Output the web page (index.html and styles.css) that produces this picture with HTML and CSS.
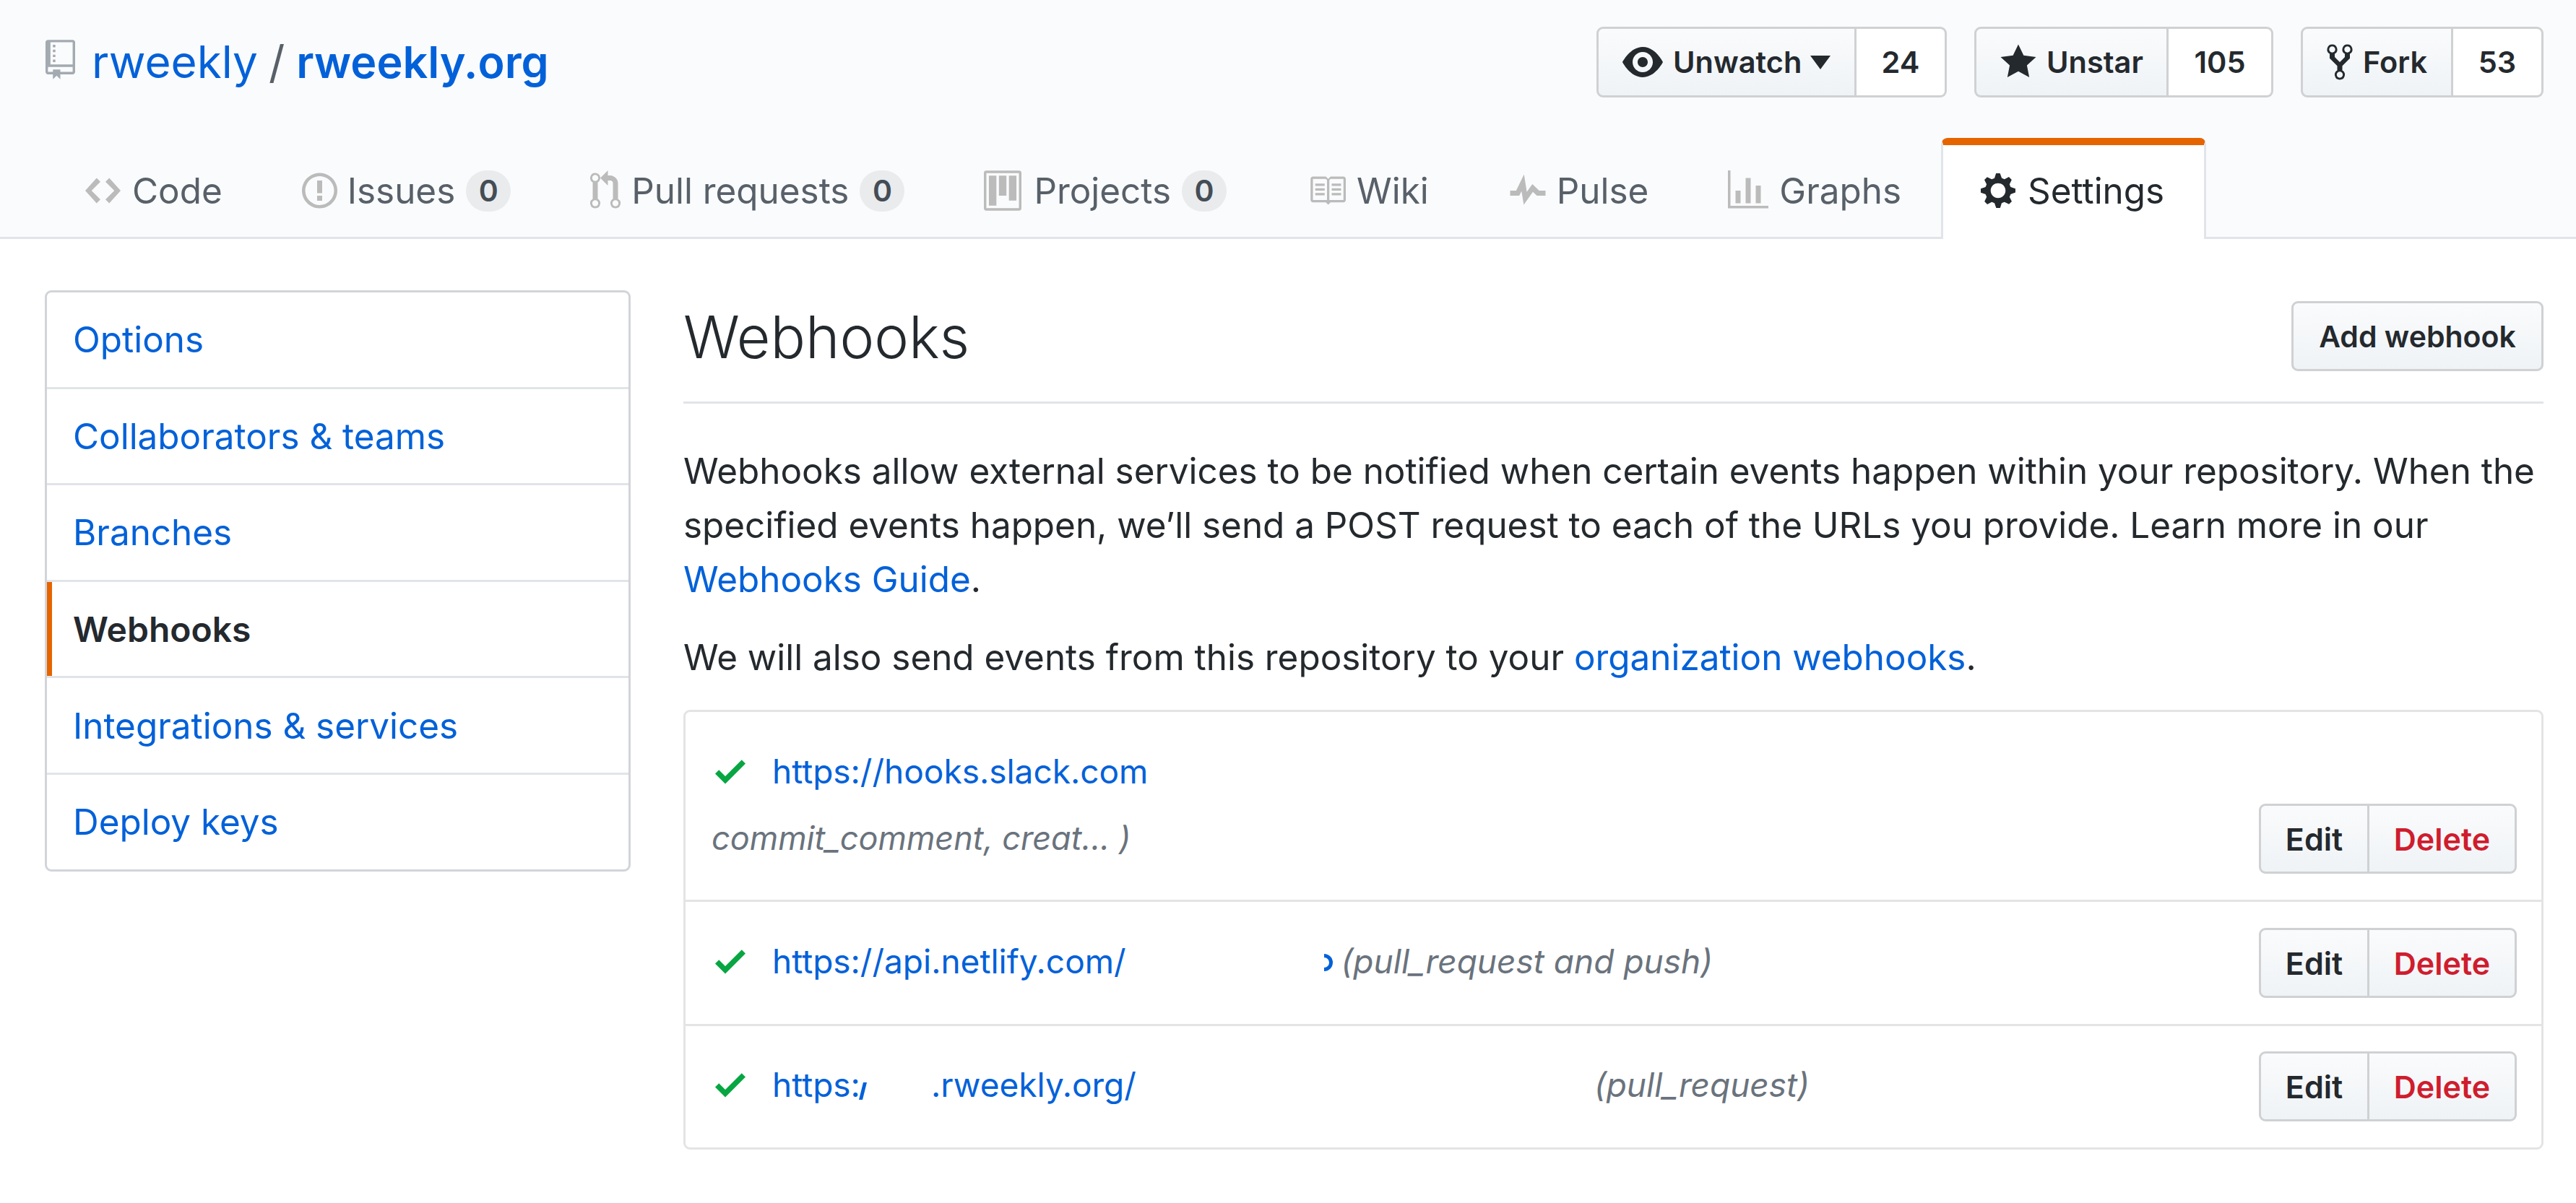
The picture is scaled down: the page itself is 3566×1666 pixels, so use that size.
FILE: index.html
```html
<!DOCTYPE html>
<html lang="en">
<head>
<meta charset="utf-8">
<title>Webhooks</title>
<link rel="stylesheet" href="styles.css">
</head>
<body>
<header class="pagehead">
  <div class="repo-row">
    <h1 class="repo-title">
      <svg class="ico ico-repo" viewBox="0 0 12 16"><path d="M4 9H3V8h1v1zm0-3H3v1h1V6zm0-2H3v1h1V4zm0-2H3v1h1V2zm8-1v12c0 .55-.45 1-1 1H6v2l-1.5-1.5L3 16v-2H1c-.55 0-1-.45-1-1V1c0-.55.45-1 1-1h10c.55 0 1 .45 1 1zm-1 10H1v2h2v-1h3v1h5v-2zm0-10H2v9h9V1z"/></svg>
      <a class="owner" href="#">rweekly</a><span class="slash">/</span><a class="repo" href="#">rweekly.org</a>
    </h1>
    <div class="actions">
      <div class="social s-watch">
        <span class="social-btn"><svg class="ico ico-eye" viewBox="0 0 16 16"><path d="M8.06 2C3 2 0 8 0 8s3 6 8.06 6C13 14 16 8 16 8s-3-6-7.94-6zM8 12c-2.2 0-4-1.78-4-4 0-2.2 1.8-4 4-4 2.22 0 4 1.8 4 4 0 2.22-1.78 4-4 4zm2-4c0 1.11-.89 2-2 2-1.11 0-2-.89-2-2 0-1.11.89-2 2-2 1.11 0 2 .89 2 2z"/></svg>Unwatch<span class="caret"></span></span>
        <span class="social-count">24</span>
      </div>
      <div class="social s-star">
        <span class="social-btn"><svg class="ico ico-star" viewBox="0 0 14 16"><path d="M14 6l-4.9-.64L7 1 4.9 5.36 0 6l3.6 3.26L2.67 14 7 11.67 11.33 14l-.93-4.74L14 6z"/></svg>Unstar</span>
        <span class="social-count">105</span>
      </div>
      <div class="social s-fork">
        <span class="social-btn"><svg class="ico ico-fork" viewBox="0 0 10 16"><path d="M8 1a1.993 1.993 0 0 0-1 3.72V6L5 8 3 6V4.72A1.993 1.993 0 0 0 2 1a1.993 1.993 0 0 0-1 3.72V6.5l3 3v1.78A1.993 1.993 0 0 0 5 15a1.993 1.993 0 0 0 1-3.72V9.5l3-3V4.72A1.993 1.993 0 0 0 8 1zM2 4.2C1.34 4.2.8 3.65.8 3c0-.65.55-1.2 1.2-1.2.65 0 1.2.55 1.2 1.2 0 .65-.55 1.2-1.2 1.2zm3 10c-.66 0-1.2-.55-1.2-1.2 0-.65.55-1.2 1.2-1.2.65 0 1.2.55 1.2 1.2 0 .65-.55 1.2-1.2 1.2zm3-10c-.66 0-1.2-.55-1.2-1.2 0-.65.55-1.2 1.2-1.2.65 0 1.2.55 1.2 1.2 0 .65-.55 1.2-1.2 1.2z"/></svg>Fork</span>
        <span class="social-count">53</span>
      </div>
    </div>
  </div>
  <nav class="tabs">
    <a class="tab" href="#"><svg class="ico ti-code" viewBox="0 0 14 16"><path d="M9.5 3L8 4.5 11.5 8 8 11.5 9.5 13 14 8 9.5 3zm-5 0L0 8l4.5 5L6 11.5 2.5 8 6 4.5 4.5 3z"/></svg>Code</a>
    <a class="tab" href="#"><svg class="ico ti-issue" viewBox="0 0 14 16"><path d="M7 2.3c3.14 0 5.7 2.56 5.7 5.7s-2.56 5.7-5.7 5.7A5.71 5.71 0 0 1 1.3 8c0-3.14 2.56-5.7 5.7-5.7zM7 1C3.14 1 0 4.14 0 8s3.14 7 7 7 7-3.14 7-7-3.14-7-7-7zm1 3H6v5h2V4zm0 6H6v2h2v-2z"/></svg>Issues<span class="counter">0</span></a>
    <a class="tab" href="#"><svg class="ico ti-pull" viewBox="0 0 12 16"><path d="M11 11.28V5c-.03-.78-.34-1.47-.94-2.06C9.46 2.35 8.78 2.03 8 2H7V0L4 3l3 3V4h1c.27.02.48.11.69.31.21.2.3.42.31.69v6.28A1.993 1.993 0 0 0 10 15a1.993 1.993 0 0 0 1-3.72zm-1 2.92c-.66 0-1.2-.55-1.2-1.2 0-.65.55-1.2 1.2-1.2.65 0 1.2.55 1.2 1.2 0 .65-.55 1.2-1.2 1.2zM4 3c0-1.11-.89-2-2-2a1.993 1.993 0 0 0-1 3.72v6.56A1.993 1.993 0 0 0 2 15a1.993 1.993 0 0 0 1-3.72V4.72c.59-.34 1-.98 1-1.72zm-.8 10c0 .66-.55 1.2-1.2 1.2-.65 0-1.2-.55-1.2-1.2 0-.65.55-1.2 1.2-1.2.65 0 1.2.55 1.2 1.2zM2 4.2C1.34 4.2.8 3.65.8 3c0-.65.55-1.2 1.2-1.2.65 0 1.2.55 1.2 1.2 0 .65-.55 1.2-1.2 1.2z"/></svg>Pull requests<span class="counter">0</span></a>
    <a class="tab" href="#"><svg class="ico ti-proj" viewBox="0 0 15 16"><path d="M10 12h3V2h-3v10zm-4-2h3V2H6v8zm-4 4h3V2H2v12zm-1 1h13V1H1v14zM14 0H1a1 1 0 0 0-1 1v14a1 1 0 0 0 1 1h13a1 1 0 0 0 1-1V1a1 1 0 0 0-1-1z"/></svg>Projects<span class="counter">0</span></a>
    <a class="tab" href="#"><svg class="ico ti-book" viewBox="0 0 16 16"><path d="M3 5h4v1H3V5zm0 3h4V7H3v1zm0 2h4V9H3v1zm11-5h-4v1h4V5zm0 2h-4v1h4V7zm0 2h-4v1h4V9zm2-6v9c0 .55-.45 1-1 1H9.5l-1 1-1-1H2c-.55 0-1-.45-1-1V3c0-.55.45-1 1-1h5.5l1 1 1-1H15c.55 0 1 .45 1 1zm-8 .5L7.5 3H2v9h6V3.5zm7-.5H9.5l-.5.5V12h6V3z"/></svg>Wiki</a>
    <a class="tab" href="#"><svg class="ico ti-pulse" viewBox="0 0 14 16"><path d="M11.5 8L8.8 5.4 6.6 8.5 5.5 1.6 2.38 8H0v2h3.6l.9-1.8.9 5.4L9 8.5l1.6 1.5H14V8z"/></svg>Pulse</a>
    <a class="tab" href="#"><svg class="ico ti-graph" viewBox="0 0 16 16"><path d="M16 14v1H0V0h1v14h15zM5 13H3V8h2v5zm4 0H7V3h2v10zm4 0h-2V6h2v7z"/></svg>Graphs</a>
    <a class="tab tab-active" href="#"><svg class="ico ti-gear" viewBox="0 0 14 16"><path d="M14 8.77v-1.6l-1.94-.64-.45-1.09.88-1.84-1.13-1.13-1.81.91-1.09-.45-.69-1.92h-1.6l-.63 1.94-1.11.45-1.84-.88-1.13 1.13.91 1.81-.45 1.09L0 7.23v1.59l1.94.64.45 1.09-.88 1.84 1.13 1.13 1.81-.91 1.09.45.69 1.92h1.59l.63-1.94 1.11-.45 1.84.88 1.13-1.13-.92-1.81.47-1.09L14 8.75v.02zM7 11c-1.66 0-3-1.34-3-3s1.34-3 3-3 3 1.34 3 3-1.34 3-3 3z"/></svg>Settings</a>
  </nav>
</header>
<main class="layout">
  <aside class="menu">
    <a class="menu-item" href="#">Options</a>
    <a class="menu-item" href="#">Collaborators &amp; teams</a>
    <a class="menu-item" href="#">Branches</a>
    <a class="menu-item selected" href="#">Webhooks</a>
    <a class="menu-item" href="#">Integrations &amp; services</a>
    <a class="menu-item" href="#">Deploy keys</a>
  </aside>
  <section class="content">
    <div class="subhead">
      <h2 class="subhead-title">Webhooks</h2>
      <a class="btn btn-add" href="#">Add webhook</a>
    </div>
    <p class="lead">Webhooks allow external services to be notified when certain events happen within your repository. When the specified events happen, we’ll send a POST request to each of the URLs you provide. Learn more in our <a href="#">Webhooks Guide</a>.</p>
    <p class="note">We will also send events from this repository to your <a href="#">organization webhooks</a>.</p>
    <div class="hooks">
      <div class="hook hook-tall">
        <div class="hook-body">
          <div class="hook-line"><svg class="ico ico-check" viewBox="0 0 12 16"><path d="M12 5l-8 8-4-4 1.5-1.5L4 10l6.5-6.5L12 5z"/></svg><a class="hook-url" href="#">https://hooks.slack.com</a></div>
          <div class="hook-events">commit_comment, creat... )</div>
        </div>
        <div class="btn-group"><a class="gbtn" href="#">Edit</a><a class="gbtn danger" href="#">Delete</a></div>
      </div>
      <div class="hook hook-single">
        <div class="hook-line"><svg class="ico ico-check" viewBox="0 0 12 16"><path d="M12 5l-8 8-4-4 1.5-1.5L4 10l6.5-6.5L12 5z"/></svg><a class="hook-url url-netlify" href="#">https://api.netlify.com/</a><span class="frag frag-o" aria-hidden="true"></span><em class="ev ev-netlify">(pull_request and push)</em></div>
        <div class="btn-group"><a class="gbtn" href="#">Edit</a><a class="gbtn danger" href="#">Delete</a></div>
      </div>
      <div class="hook hook-single hook-last">
        <div class="hook-line"><svg class="ico ico-check" viewBox="0 0 12 16"><path d="M12 5l-8 8-4-4 1.5-1.5L4 10l6.5-6.5L12 5z"/></svg><a class="hook-url url-a" href="#">https:</a><span class="frag frag-slash" aria-hidden="true"></span><a class="hook-url url-b" href="#">.rweekly.org/</a><em class="ev ev-rw">(pull_request)</em></div>
        <div class="btn-group"><a class="gbtn" href="#">Edit</a><a class="gbtn danger" href="#">Delete</a></div>
      </div>
    </div>
  </section>
</main>
</body>
</html>
```
FILE: styles.css
```css
* { box-sizing: border-box; }
html, body { margin: 0; padding: 0; background: #fff; }
body { font-family: Inter, "Liberation Sans", sans-serif; font-size: 49.4px; color: #24292e; }
a { color: #0261d9; text-decoration: none; }
.ico { display: block; fill: currentColor; flex: none; }
.ico path { fill-rule: evenodd; }

.pagehead { background: #fafbfc; border-bottom: 3px solid #e1e4e8; height: 331px; }
.repo-row { display: flex; justify-content: space-between; align-items: flex-start; padding: 37px 45px 0 63px; height: 191px; }
.repo-title { display: flex; align-items: center; margin: 7px 0 0; font-size: 62px; font-weight: 400; line-height: 84px; color: #586069; }
.ico-repo { width: 41px; height: 55px; color: #a3aab1; margin-right: 23px; margin-top: -7px; }
.slash { margin: 0 16px 0 15px; }
.repo { font-size: 61px; font-weight: 600; }

.actions { display: flex; gap: 38px; }
.social { display: flex; height: 98px; font-size: 41.5px; font-weight: 600; }
.social-btn { display: flex; align-items: center; background: linear-gradient(#fafbfc, #eff3f6); border: 3px solid #cfd1d3; border-radius: 9px 0 0 9px; padding: 0 0 0 33px; }
.social-count { display: flex; align-items: center; justify-content: center; background: #fff; border: 3px solid #cfd1d3; border-left: 0; border-radius: 0 9px 9px 0; }
.s-watch .social-btn { width: 360px; }
.s-watch .social-count { width: 125px; }
.s-star .social-btn { width: 269px; }
.s-star .social-count { width: 145px; }
.s-fork .social-btn { width: 211px; }
.s-fork .social-count { width: 125px; }
.ico-eye { width: 56px; height: 56px; margin-right: 14px; }
.ico-star { width: 50px; height: 56px; margin-right: 14px; }
.ico-fork { width: 36px; height: 56px; margin-right: 14px; }
.caret { width: 0; height: 0; margin-left: 12px; border: 14px solid transparent; border-top: 19px solid #24292e; border-bottom: 0; }

.tabs { display: flex; padding-left: 63px; }
.tab { display: flex; align-items: center; height: 140px; padding: 0 52px 4px; border: 3px solid transparent; border-top-width: 10px; border-bottom: 0; color: #586069; }
.tab .ico { color: #bbb; }
.ti-code { width: 49px; height: 56px; margin-right: 16px; }
.ti-issue { width: 49px; height: 56px; margin-right: 14px; }
.ti-pull { width: 42px; height: 56px; margin-right: 15px; }
.ti-proj { width: 52px; height: 56px; margin-right: 17px; }
.ti-book { width: 52px; height: 56px; margin: 0 15px 0 3px; }
.ti-pulse { width: 50px; height: 56px; margin: 0 15px 0 2px; }
.ti-graph { width: 56px; height: 56px; margin-right: 15px; }
.ti-gear { width: 48px; height: 56px; margin-right: 17px; }
.tab-active { background: #fff; color: #24292e; border-color: #e66400 #e1e4e8 #fff; border-radius: 9px 9px 0 0; padding-right: 55px; }
.tab-active .ico { color: #24292e; }
.counter { display: flex; align-items: center; justify-content: center; width: 62px; height: 57px; margin-left: 15px; border-radius: 30px; background: #e9ebed; color: #444d56; font-size: 41px; font-weight: 600; }

.layout { display: grid; grid-template-columns: 811px 1fr; column-gap: 73px; padding: 71px 45px 0 62px; align-items: start; }
.menu { display: flex; flex-direction: column; border: 3px solid #d1d5da; border-radius: 9px; background: #fff; }
.menu-item { display: flex; align-items: center; height: 133.6px; padding-left: 36px; border-bottom: 3px solid #e1e4e8; }
.menu-item:last-child { border-bottom: 0; height: 131px; }
.selected { color: #24292e; font-size: 48px; font-weight: 600; box-shadow: inset 7px 0 0 #e66400; }

.subhead { display: flex; justify-content: space-between; align-items: flex-start; height: 157px; border-bottom: 3px solid #e1e4e8; }
.subhead-title { margin: 7px 0 0; font-size: 80.6px; font-weight: 300; line-height: 116px; }
.btn { display: flex; align-items: center; justify-content: center; height: 97px; width: 349px; margin-top: 15px; font-size: 41px; font-weight: 600; color: #24292e; border: 3px solid #cfd1d3; border-radius: 9px; background: linear-gradient(#fafbfc, #eff3f6); }
.lead { margin: 56px 0 0; line-height: 75px; }
.note { margin: 33px 0 0; line-height: 75px; }

.hooks { margin-top: 35px; border: 3px solid #e4e4e4; border-radius: 9px; font-size: 46px; }
.hook { display: flex; justify-content: space-between; align-items: center; padding: 36px 34px 36px 36px; border-bottom: 3px solid #e4e4e4; }
.hook-last { border-bottom: 0; padding-top: 35px; }
.hook-tall { align-items: flex-end; }
.hook-body { padding: 8px 0 12px; }
.hook-line { display: flex; align-items: center; height: 75px; }
.hook-single .hook-line { height: 80px; padding-bottom: 5px; }
.ico-check { width: 42px; height: 56px; color: #08a642; margin: 0 37px 0 5px; }
.hook-url { white-space: nowrap; }
.hook-events { margin-top: 18px; line-height: 75px; font-size: 45px; font-style: italic; color: #6a737d; }
.ev { font-style: italic; color: #6a737d; white-space: nowrap; }
.frag { display: block; flex: none; overflow: hidden; }
.frag-o { width: 12px; height: 24px; margin-left: 274px; margin-top: 4px; border: 5px solid #0261d9; border-left: 0; border-radius: 0 12px 12px 0; }
.ev-netlify { margin-left: 12px; }
.frag-slash { width: 5px; height: 24px; margin-top: 18px; margin-left: 1px; background: #0261d9; transform: skewX(-14deg); }
.url-b { margin-left: 92px; }
.ev-rw { margin-left: 634px; }

.btn-group { display: flex; height: 97px; font-size: 43px; font-weight: 600; flex: none; }
.gbtn { display: flex; align-items: center; justify-content: center; color: #24292e; background: linear-gradient(#fafbfc, #eff3f6); border: 3px solid #cfd1d3; width: 153px; border-radius: 9px 0 0 9px; }
.gbtn.danger { color: #cf1d2e; width: 207px; margin-left: -3px; border-radius: 0 9px 9px 0; }
```
